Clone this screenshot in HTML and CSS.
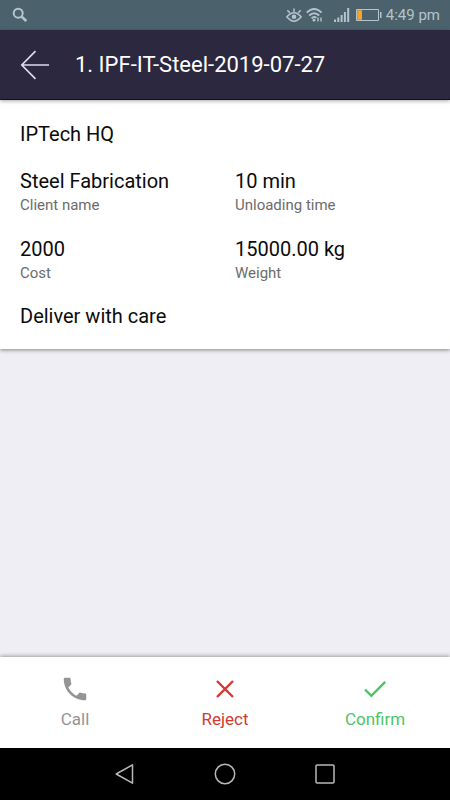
FILE: index.html
```html
<!DOCTYPE html>
<html lang="en">
<head>
<meta charset="utf-8">
<meta name="viewport" content="width=device-width, initial-scale=1">
<title>IPF-IT-Steel-2019-07-27</title>
<link rel="stylesheet" href="styles.css">
</head>
<body>
<div class="status">
  <svg class="search" width="16" height="16" viewBox="0 0 16 16" fill="none" stroke="currentColor"><circle cx="6.2" cy="6.2" r="4.5" stroke-width="2"/><path d="M9.7 9.7L14.3 14" stroke-width="2.6"/></svg>
  <div class="indicators">
    <svg width="16" height="16" viewBox="0 0 16 16" fill="none" stroke="currentColor" stroke-width="1.5"><path d="M.8 9.8Q8 1.6 15.2 9.8Q8 18.6 .8 9.8ZM8 4.8V1.4M3.8 5.8L1.4 3.4M12.2 5.8l2.4-2.4"/><circle cx="8" cy="9.8" r="2.3" fill="currentColor" stroke="none"/></svg>
    <svg class="wifi" width="17" height="16" viewBox="0 0 17 16" fill="none" stroke="currentColor" stroke-width="1.9"><path d="M.8 5.6Q8 -1.4 15.6 5.6M3.2 8.5Q8.2 3.8 13.2 8.5M5.6 11.3Q8 9 10.4 10.8"/><circle cx="8" cy="13.2" r="1.4" fill="currentColor" stroke="none"/><path d="M12 10.5v4M15 10.5v4" stroke-width="1.4"/></svg>
    <svg class="signal" width="16" height="16" viewBox="0 0 16 16" fill="currentColor"><path d="M0 12.5h2V15H0zM3.3 10.5h2V15h-2zM6.6 8h2v7h-2zM9.9 5h2v10h-2zM13.2 1h2v14h-2z"/></svg>
    <svg class="battery" width="26" height="16" viewBox="0 0 26 16"><path d="M.5 2.5h22v11H.5z" fill="none" stroke="currentColor"/><path d="M24 5h1.5v6H24z" fill="currentColor"/><path d="M1.2 3.2h4.8v9.6H1.2z" fill="#f5a32c"/></svg>
    <time>4:49 pm</time>
  </div>
</div>
<header class="appbar">
  <button class="back" type="button" aria-label="Back"><svg width="30" height="30" viewBox="0 0 30 30" fill="none" stroke="currentColor" stroke-width="1.7"><path d="M15.5 1.2L1.8 15L15.5 28.8M1.8 15H29"/></svg></button>
  <h1>1. IPF-IT-Steel-2019-07-27</h1>
</header>
<main>
  <section class="card">
    <h2 class="value">IPTech HQ</h2>
    <dl class="details">
      <div class="item"><dt>Client name</dt><dd class="value">Steel Fabrication</dd></div>
      <div class="item"><dt>Unloading time</dt><dd class="value">10 min</dd></div>
      <div class="item"><dt>Cost</dt><dd class="value">2000</dd></div>
      <div class="item"><dt>Weight</dt><dd class="value">15000.00 kg</dd></div>
    </dl>
    <p class="value">Deliver with care</p>
  </section>
</main>
<footer class="actions">
  <button class="action call" type="button"><svg width="30" height="30" viewBox="0 0 24 24" fill="currentColor"><path d="M6.62 10.79c1.44 2.83 3.76 5.14 6.59 6.59l2.2-2.2c.27-.27.67-.36 1.02-.24 1.12.37 2.33.57 3.57.57.55 0 1 .45 1 1V20c0 .55-.45 1-1 1-9.39 0-17-7.61-17-17 0-.55.45-1 1-1h3.5c.55 0 1 .45 1 1 0 1.25.2 2.45.57 3.57.11.35.03.74-.25 1.02l-2.2 2.2z"/></svg>Call</button>
  <button class="action reject" type="button"><svg width="30" height="30" viewBox="0 0 30 30" fill="none" stroke="currentColor" stroke-width="2.4"><path d="M7 7L23 23M23 7L7 23"/></svg>Reject</button>
  <button class="action confirm" type="button"><svg width="30" height="30" viewBox="0 0 30 30" fill="none" stroke="currentColor" stroke-width="2.4"><path d="M5 15.5L11.3 21.8L25.2 7.8"/></svg>Confirm</button>
</footer>
<nav class="sysnav">
  <button type="button" aria-label="Back"><svg width="22" height="22" viewBox="0 0 22 22"><path d="M18.5 1.8V20.2L2.2 11Z"/></svg></button>
  <button type="button" aria-label="Home"><svg width="22" height="22" viewBox="0 0 22 22"><circle cx="11" cy="11" r="9.7"/></svg></button>
  <button type="button" aria-label="Recent apps"><svg width="22" height="22" viewBox="0 0 22 22"><rect x="2" y="2" width="18" height="18" rx="1"/></svg></button>
</nav>
</body>
</html>
```
FILE: styles.css
```css
* { box-sizing: border-box; margin: 0; }
body {
  min-height: 100vh;
  display: flex;
  flex-direction: column;
  background: #eeeef4;
  color: #0b0b0b;
  font-family: Roboto, "Liberation Sans", sans-serif;
}
button {
  padding: 0;
  border: 0;
  background: none;
  font: inherit;
  color: inherit;
}
svg { display: block; }
.status {
  display: flex;
  align-items: center;
  justify-content: space-between;
  height: 30px;
  padding: 0 10px 0 12px;
  background: #4b626d;
  color: #b4c4cb;
}
.indicators { display: flex; align-items: center; }
.wifi { margin-left: 4px; }
.signal { margin-left: 11px; }
.battery { margin: 0 4px 0 6px; }
time { font-size: 15px; line-height: 30px; }
.appbar {
  position: relative;
  display: flex;
  align-items: center;
  gap: 25px;
  height: 70px;
  padding: 0 20px;
  background: #2c2840;
  border-bottom: 1px solid #12101c;
  box-shadow: 0 1px 4px rgba(0, 0, 0, .35);
  color: #fff;
}
.back { color: #dcdaf2; }
h1 { font-size: 22px; font-weight: 400; line-height: 32px; }
main { flex: 1; }
.card {
  padding: 22px 20px 21px;
  background: #fff;
  box-shadow: 0 1px 4px rgba(0, 0, 0, .45);
}
.value { font-size: 20px; font-weight: 400; line-height: 24px; }
.details {
  display: grid;
  grid-template-columns: 1fr 1fr;
  column-gap: 20px;
  row-gap: 20px;
  padding: 23px 0 19px;
}
.item { display: flex; flex-direction: column-reverse; }
dd { margin: 0; }
dt { font-size: 15px; line-height: 24px; color: #6c6c6c; }
.actions {
  display: grid;
  grid-template-columns: repeat(3, 1fr);
  height: 91px;
  background: #fff;
  box-shadow: 0 -1px 4px rgba(0, 0, 0, .35);
}
.action {
  display: flex;
  flex-direction: column;
  align-items: center;
  gap: 3px;
  padding-top: 17px;
  font-size: 17px;
  line-height: 24px;
}
.call { color: #949494; }
.reject { color: #d13a30; }
.confirm { color: #4cc565; }
.sysnav {
  position: relative;
  display: flex;
  justify-content: center;
  gap: 78px;
  height: 52px;
  background: #000;
}
.sysnav svg { fill: none; stroke: #b8b8b8; stroke-width: 1.5; stroke-linejoin: round; }
```
